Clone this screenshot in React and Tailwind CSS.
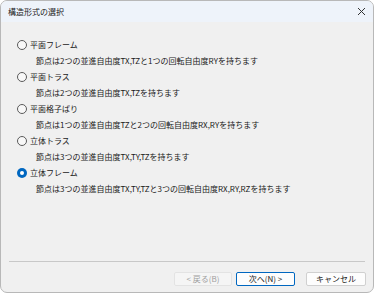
import React from "react";

const items = [
  { label: "平面フレーム", desc: "節点は2つの並進自由度TX,TZと1つの回転自由度RYを持ちます" },
  { label: "平面トラス", desc: "節点は2つの並進自由度TX,TZを持ちます" },
  { label: "平面格子ばり", desc: "節点は1つの並進自由度TZと2つの回転自由度RX,RYを持ちます" },
  { label: "立体トラス", desc: "節点は3つの並進自由度TX,TY,TZを持ちます" },
  { label: "立体フレーム", desc: "節点は3つの並進自由度TX,TY,TZと3つの回転自由度RX,RY,RZを持ちます", checked: true },
];

function Radio({ checked }) {
  if (checked) {
    return (
      <div className="w-[10px] h-[10px] rounded-full bg-[#0067c0] flex items-center justify-center shrink-0">
        <div className="w-[4px] h-[4px] rounded-full bg-white" />
      </div>
    );
  }
  return <div className="w-[10px] h-[10px] rounded-full border border-[#5a5a5a] bg-[#f8f8f8] shrink-0" />;
}

export default function App() {
  return (
    <div
      className="w-[375px] h-[294px] bg-white"
      style={{ fontFamily: '"Noto Sans CJK JP", "Noto Sans", sans-serif' }}
    >
      <div className="w-[374px] h-[293px] border border-[#b8b8b8] rounded-[7px] overflow-hidden flex flex-col bg-[#f0f0f0]">
        <div className="h-[21px] bg-[#eef3fa] flex items-center justify-between pl-[7px] pr-[6px] shrink-0">
          <span className="text-[8px] text-[#1a1a1a] leading-none">構造形式の選択</span>
          <svg width="9" height="9" viewBox="0 0 9 9" className="mr-[1px]">
            <path d="M1 1 L8 8 M8 1 L1 8" stroke="#333" strokeWidth="1" />
          </svg>
        </div>
        <div className="flex-1 flex flex-col">
          <div className="pt-[15px] pl-[16px] flex flex-col">
            {items.map((it) => (
              <div key={it.label} className="flex flex-col">
                <div className="h-[16px] flex items-center gap-[3px]">
                  <Radio checked={it.checked} />
                  <span className="text-[8px] leading-none text-[#1a1a1a]">{it.label}</span>
                </div>
                <div className="h-[16px] flex items-center pl-[19px]">
                  <span className="text-[8px] leading-none text-[#1a1a1a] whitespace-nowrap">{it.desc}</span>
                </div>
              </div>
            ))}
          </div>
          <div className="flex-1" />
          <div className="mx-[8px] h-[1px] bg-[#c8c8c8]" />
          <div className="flex justify-end items-center pr-[7px] pt-[10px] pb-[6px]">
            <div className="w-[58px] h-[14px] rounded-[2px] border border-[#e3e3e3] bg-[#f5f5f5] flex items-center justify-center text-[8px] leading-none text-[#a0a0a0]">
              &lt; 戻る(B)
            </div>
            <div className="ml-[4px] w-[59px] h-[14px] rounded-[2px] border border-[#0067c0] bg-[#fdfdfd] flex items-center justify-center text-[8px] leading-none text-[#1a1a1a]">
              次へ(N) &gt;
            </div>
            <div className="ml-[11px] w-[60px] h-[14px] rounded-[2px] border border-[#d0d0d0] bg-[#fdfdfd] flex items-center justify-center text-[8px] leading-none text-[#1a1a1a]">
              キャンセル
            </div>
          </div>
        </div>
      </div>
    </div>
  );
}
